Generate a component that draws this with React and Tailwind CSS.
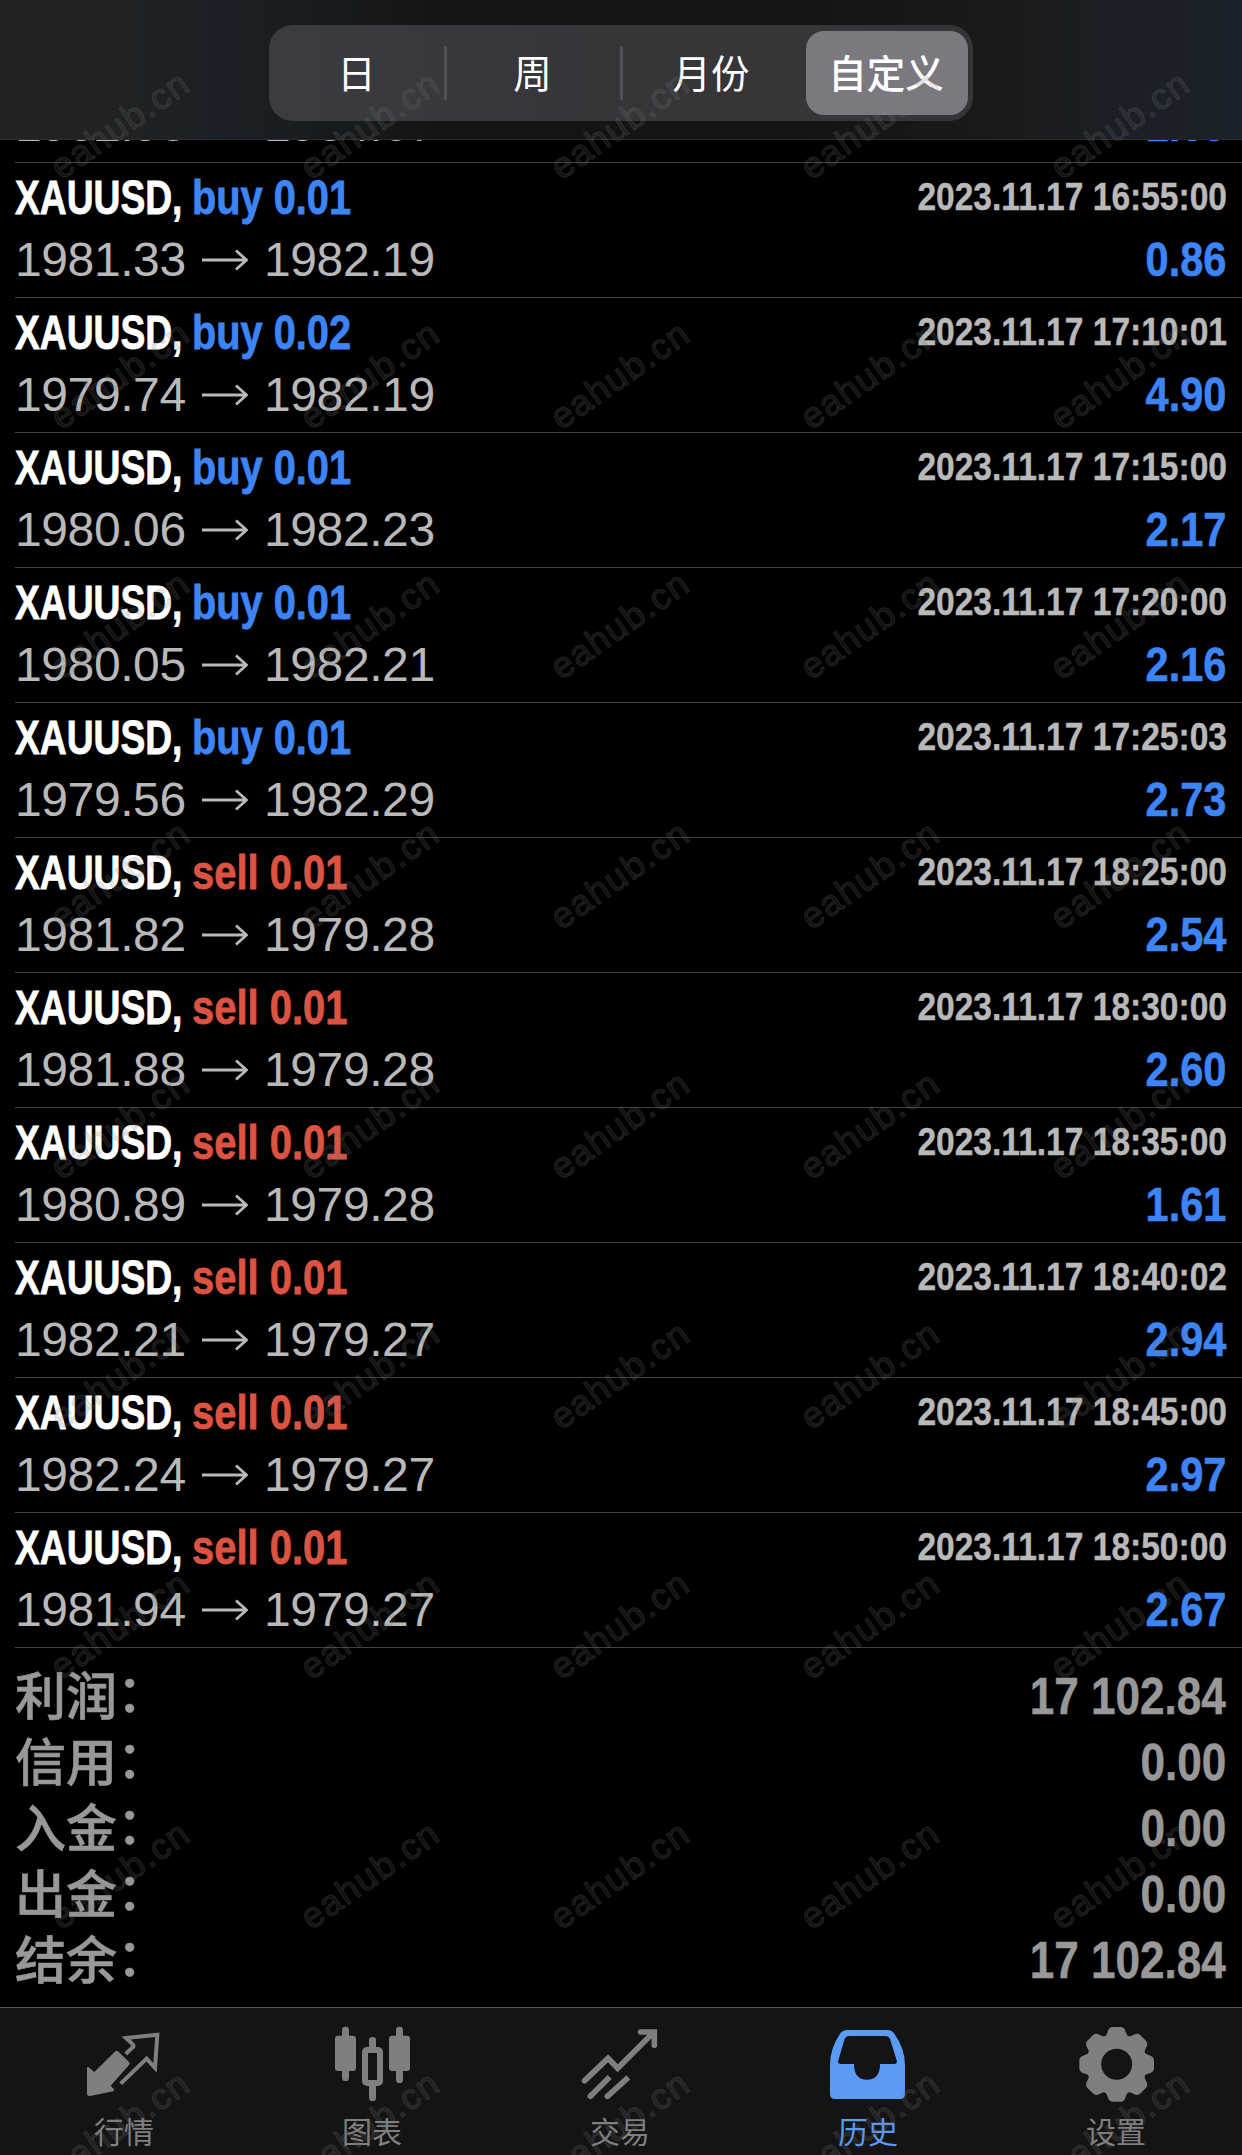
import React from "react";

const trades = [
  ["buy 0.01", "2023.11.17 16:55:00", "1981.33", "1982.19", "0.86"],
  ["buy 0.02", "2023.11.17 17:10:01", "1979.74", "1982.19", "4.90"],
  ["buy 0.01", "2023.11.17 17:15:00", "1980.06", "1982.23", "2.17"],
  ["buy 0.01", "2023.11.17 17:20:00", "1980.05", "1982.21", "2.16"],
  ["buy 0.01", "2023.11.17 17:25:03", "1979.56", "1982.29", "2.73"],
  ["sell 0.01", "2023.11.17 18:25:00", "1981.82", "1979.28", "2.54"],
  ["sell 0.01", "2023.11.17 18:30:00", "1981.88", "1979.28", "2.60"],
  ["sell 0.01", "2023.11.17 18:35:00", "1980.89", "1979.28", "1.61"],
  ["sell 0.01", "2023.11.17 18:40:02", "1982.21", "1979.27", "2.94"],
  ["sell 0.01", "2023.11.17 18:45:00", "1982.24", "1979.27", "2.97"],
  ["sell 0.01", "2023.11.17 18:50:00", "1981.94", "1979.27", "2.67"],
];

const totals = [
  ["利润", "17 102.84"],
  ["信用", "0.00"],
  ["入金", "0.00"],
  ["出金", "0.00"],
  ["结余", "17 102.84"],
];

function PriceLine({ open, close, profit }) {
  return (
    <div className="flex h-[56px] shrink-0 items-center justify-between leading-[56px]">
      <div className="flex items-center text-[48px] tracking-[-0.4px] text-[#b9b9b9]">
        <span className="w-[187px]">{open}</span>
        <svg className="h-[24px] w-[46px]" viewBox="0 0 46 24" fill="none" stroke="#b9b9b9" strokeWidth="2.8">
          <path d="M0 12H44M34 2.5L44.5 12L34 21.5" />
        </svg>
        <span className="ml-[16px]">{close}</span>
      </div>
      <span className="mr-[1px] origin-right scale-x-[0.865] text-[48px] font-bold text-[#3d85f7] [-webkit-text-stroke:0.6px_currentColor]">
        {profit}
      </span>
    </div>
  );
}

function Trade({ side, time, open, close, profit }) {
  return (
    <div className="ml-[15px] h-[135px] border-t border-[#414141] pr-[15px]">
      <div className="flex h-[69px] items-center justify-between leading-[69px] font-bold">
        <div className="flex text-[48px] [-webkit-text-stroke:0.8px_currentColor]">
          <div className="w-[177px] whitespace-nowrap">
            <span className="inline-block origin-left scale-x-[0.775] text-white">XAUUSD,</span>
          </div>
          <span
            className={
              side.startsWith("buy")
                ? "inline-block origin-left scale-x-[0.828] whitespace-pre text-[#3d85f7]"
                : "inline-block origin-left scale-x-[0.832] whitespace-pre text-[#dd5341]"
            }
          >
            {side}
          </span>
        </div>
        <span className="-mt-[2px] origin-right scale-x-[0.86] text-[39px] whitespace-nowrap text-[#b9b9b9] [-webkit-text-stroke:0.4px_currentColor]">
          {time}
        </span>
      </div>
      <PriceLine open={open} close={close} profit={profit} />
    </div>
  );
}

function QuotesIcon() {
  return (
    <svg className="h-[84px] w-[110px]" viewBox="-3 0 330 252">
      <path
        d="M136 94Q140 91 144 94L178 127Q181 131 177 135L122 197L131 207Q134 212 130 214L60 228Q51 229 51 220V144Q51 139 56 142L73 156Z"
        fill="#7f7f7f"
      />
      <path d="M167 102L188 82Q193 78 189 74L168 54L262 44L255 144L230 116L152 191" fill="none" stroke="#7f7f7f" strokeWidth="12" />
    </svg>
  );
}

function ChartIcon() {
  return (
    <svg className="h-[84px] w-[110px]" viewBox="951 90 330 252" fill="#7f7f7f">
      <rect x="1005" y="137" width="63" height="106" rx="9" />
      <rect x="1026" y="110" width="21" height="163" rx="10" />
      <rect x="1167" y="137" width="63" height="106" rx="9" />
      <rect x="1188" y="110" width="21" height="169" rx="10" />
      <rect x="1107" y="141" width="21" height="40" rx="10" />
      <rect x="1107" y="280" width="21" height="53" rx="10" />
      <rect x="1095" y="180" width="45" height="99" rx="6" fill="none" stroke="#7f7f7f" strokeWidth="18" />
    </svg>
  );
}

function TradeIcon() {
  return (
    <svg className="h-[84px] w-[110px]" viewBox="-15 0 330 252" fill="none" stroke="#7f7f7f" strokeWidth="17">
      <path d="M44 182L114 115L143 145L248 40" strokeLinecap="round" strokeLinejoin="miter" />
      <path d="M212 36H253V76" strokeLinecap="round" strokeLinejoin="miter" />
      <path d="M228 38H252V62Z" fill="#7f7f7f" stroke="none" />
      <path d="M61 229L119 171M112 229L175 172" />
      <path d="M61 229L63 227M112 229L114 227" strokeLinecap="round" />
    </svg>
  );
}

function HistoryIcon() {
  return (
    <svg className="h-[84px] w-[110px]" viewBox="-21 0 330 252">
      <path
        fillRule="evenodd"
        fill="#5b9bf6"
        d="M80 30H204Q215 30 221 38Q255 85 255 135V222Q255 237 240 237H45Q30 237 30 222V135Q30 85 62 38Q69 30 80 30ZM87 48Q78 48 74 57L55 121Q52 132 63 132H102Q102 179 141 179Q180 179 180 132H222Q233 132 230 121L210 57Q206 48 197 48Z"
      />
    </svg>
  );
}

function SettingsIcon() {
  const teeth = [0, 45, 90, 135, 180, 225, 270, 315];
  return (
    <svg className="h-[84px] w-[110px]" viewBox="-27 0 330 252">
      <circle cx="140" cy="133" r="69" fill="none" stroke="#7f7f7f" strokeWidth="45" />
      {teeth.map((a) => (
        <path
          key={a}
          transform={`rotate(${a} 140 133)`}
          fill="#7f7f7f"
          d="M98 62Q111 45 114 32Q118 21 128 21H152Q162 21 166 32Q169 45 182 62Z"
        />
      ))}
    </svg>
  );
}

const tabs = [
  ["行情", QuotesIcon],
  ["图表", ChartIcon],
  ["交易", TradeIcon],
  ["历史", HistoryIcon],
  ["设置", SettingsIcon],
];

export default function App() {
  return (
    <div className="relative flex h-[2155px] w-[1242px] flex-col overflow-hidden bg-black font-['Liberation_Sans','Noto_Sans_CJK_SC',sans-serif]">
      <header className="flex h-[140px] shrink-0 justify-center border-b border-[#2b2b2b] bg-[linear-gradient(90deg,#232323_0px,#212222_110px,#1b2026_210px,#191d21_290px,#141414_440px,#141414_800px,#1a1a1a_1000px,#1b1f26_1130px,#1b212a_1242px)] pt-[25px]">
        <nav className="flex h-[96px] w-[704px] items-center rounded-[24px] bg-[linear-gradient(90deg,#3a3c42,#363639_45%,#353538)] font-['Noto_Sans_CJK_SC',sans-serif] text-[38.5px] text-white">
          <span className="-mt-[3px] w-[175px] text-center">日</span>
          <i className="h-[54px] w-[3px] rounded-full bg-[#525257]" />
          <span className="-mt-[3px] w-[173px] pr-[2px] text-center">周</span>
          <i className="h-[54px] w-[3px] rounded-full bg-[#525257]" />
          <span className="-mt-[3px] w-[183px] pr-[7px] text-center">月份</span>
          <span className="h-[84px] w-[162px] rounded-[18px] bg-[#7b797f] pr-[2px] text-center leading-[80px] font-medium">自定义</span>
        </nav>
      </header>

      <main className="flex h-[1867px] shrink-0 flex-col">
        <div className="flex h-[22px] shrink-0 flex-col justify-end overflow-hidden pr-[15px] pb-[9px] pl-[15px]">
          <PriceLine open="1982.98" close="1984.67" profit="1.69" />
        </div>
        {trades.map(([side, time, open, close, profit]) => (
          <Trade key={time} side={side} time={time} open={open} close={close} profit={profit} />
        ))}
        <div className="ml-[15px] flex flex-col border-t border-[#414141] pt-[16px] pr-[15px]">
          {totals.map(([label, value]) => (
            <div key={label} className="flex h-[66px] items-center justify-between text-[51px] leading-[66px] text-[#989898]">
              <span className="-mt-[8px] flex font-['Noto_Sans_CJK_SC',sans-serif] font-medium [-webkit-text-stroke:0.6px_currentColor]">
                {label}
                <span className="-mt-[3px]">：</span>
              </span>
              <span className="mr-[1px] origin-right scale-x-[0.865] font-bold [-webkit-text-stroke:0.5px_currentColor]">{value}</span>
            </div>
          ))}
        </div>
      </main>

      <footer className="flex h-[148px] shrink-0 border-t border-[#555] bg-[#141414] pt-[12px]">
        {tabs.map(([label, Icon]) => (
          <div
            key={label}
            className={
              label === "历史"
                ? "flex w-[248px] flex-col items-center text-[#5b9bf6]"
                : "flex w-[248px] flex-col items-center text-[#7f7f7f]"
            }
          >
            <Icon />
            <span className="mt-[4px] font-['Noto_Sans_CJK_SC',sans-serif] text-[30px] leading-[44px]">{label}</span>
          </div>
        ))}
      </footer>

      <div className="pointer-events-none absolute top-0 -left-[5px] grid auto-rows-[250px] grid-cols-[repeat(5,250px)]">
        {Array.from({ length: 45 }, (_, i) => (
          <span key={i} className="flex items-center justify-center">
            <span className="-rotate-[35deg] text-[36px] tracking-[1.5px] text-[rgba(120,120,120,0.12)] [-webkit-text-stroke:1.5px_rgba(120,120,120,0.2)]">
              eahub.cn
            </span>
          </span>
        ))}
      </div>
    </div>
  );
}
